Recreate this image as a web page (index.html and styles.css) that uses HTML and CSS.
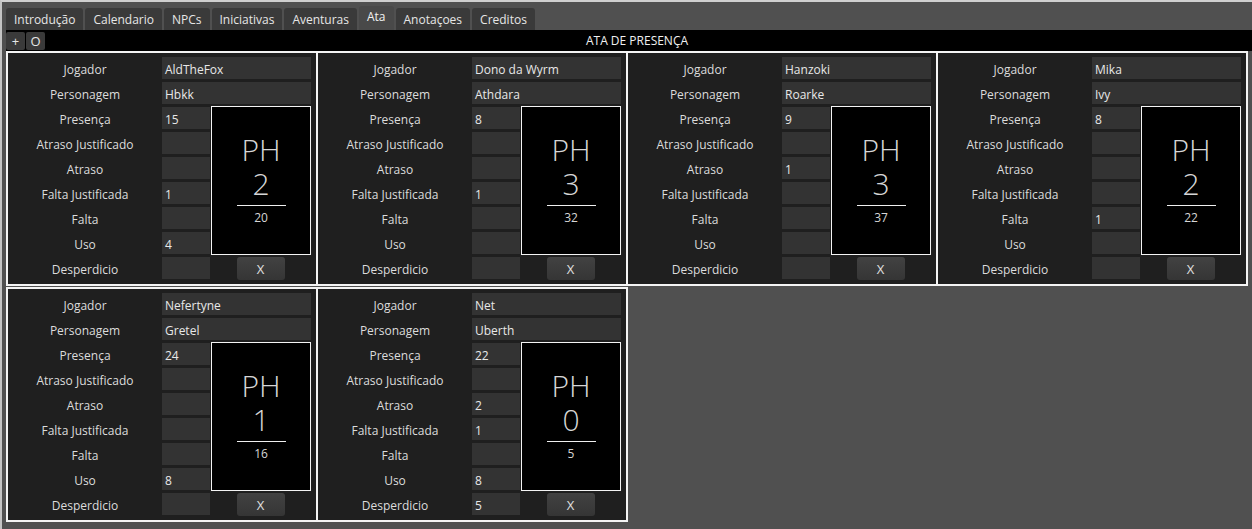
FILE: index.html
```html
<!DOCTYPE html>
<html lang="pt">
<head>
<meta charset="utf-8">
<title>Ata</title>
<link rel="stylesheet" href="styles.css">
</head>
<body>
<div class="window">
  <div class="tabs">
    <div class="tab">Introdução</div>
    <div class="tab">Calendario</div>
    <div class="tab">NPCs</div>
    <div class="tab">Iniciativas</div>
    <div class="tab">Aventuras</div>
    <div class="tab active">Ata</div>
    <div class="tab">Anotaçoes</div>
    <div class="tab">Creditos</div>
  </div>
  <div class="toolbar">
    <div class="tbtn">+</div>
    <div class="tbtn">O</div>
    <div class="title">ATA DE PRESENÇA</div>
  </div>
  <div class="cards">

    <div class="card">
      <div class="lbl">Jogador</div><div class="field wide">AldTheFox</div>
      <div class="lbl">Personagem</div><div class="field wide">Hbkk</div>
      <div class="lbl">Presença</div><div class="field">15</div>
      <div class="ph"><div class="big">PH<br>2</div><div class="rule"></div><div class="small">20</div></div>
      <div class="lbl">Atraso Justificado</div><div class="field"></div>
      <div class="lbl">Atraso</div><div class="field"></div>
      <div class="lbl">Falta Justificada</div><div class="field">1</div>
      <div class="lbl">Falta</div><div class="field"></div>
      <div class="lbl">Uso</div><div class="field">4</div>
      <div class="lbl">Desperdicio</div><div class="field"></div>
      <div class="xbtn">X</div>
    </div>

    <div class="card">
      <div class="lbl">Jogador</div><div class="field wide">Dono da Wyrm</div>
      <div class="lbl">Personagem</div><div class="field wide">Athdara</div>
      <div class="lbl">Presença</div><div class="field">8</div>
      <div class="ph"><div class="big">PH<br>3</div><div class="rule"></div><div class="small">32</div></div>
      <div class="lbl">Atraso Justificado</div><div class="field"></div>
      <div class="lbl">Atraso</div><div class="field"></div>
      <div class="lbl">Falta Justificada</div><div class="field">1</div>
      <div class="lbl">Falta</div><div class="field"></div>
      <div class="lbl">Uso</div><div class="field"></div>
      <div class="lbl">Desperdicio</div><div class="field"></div>
      <div class="xbtn">X</div>
    </div>

    <div class="card">
      <div class="lbl">Jogador</div><div class="field wide">Hanzoki</div>
      <div class="lbl">Personagem</div><div class="field wide">Roarke</div>
      <div class="lbl">Presença</div><div class="field">9</div>
      <div class="ph"><div class="big">PH<br>3</div><div class="rule"></div><div class="small">37</div></div>
      <div class="lbl">Atraso Justificado</div><div class="field"></div>
      <div class="lbl">Atraso</div><div class="field">1</div>
      <div class="lbl">Falta Justificada</div><div class="field"></div>
      <div class="lbl">Falta</div><div class="field"></div>
      <div class="lbl">Uso</div><div class="field"></div>
      <div class="lbl">Desperdicio</div><div class="field"></div>
      <div class="xbtn">X</div>
    </div>

    <div class="card">
      <div class="lbl">Jogador</div><div class="field wide">Mika</div>
      <div class="lbl">Personagem</div><div class="field wide">Ivy</div>
      <div class="lbl">Presença</div><div class="field">8</div>
      <div class="ph"><div class="big">PH<br>2</div><div class="rule"></div><div class="small">22</div></div>
      <div class="lbl">Atraso Justificado</div><div class="field"></div>
      <div class="lbl">Atraso</div><div class="field"></div>
      <div class="lbl">Falta Justificada</div><div class="field"></div>
      <div class="lbl">Falta</div><div class="field">1</div>
      <div class="lbl">Uso</div><div class="field"></div>
      <div class="lbl">Desperdicio</div><div class="field"></div>
      <div class="xbtn">X</div>
    </div>

    <div class="card">
      <div class="lbl">Jogador</div><div class="field wide">Nefertyne</div>
      <div class="lbl">Personagem</div><div class="field wide">Gretel</div>
      <div class="lbl">Presença</div><div class="field">24</div>
      <div class="ph"><div class="big">PH<br>1</div><div class="rule"></div><div class="small">16</div></div>
      <div class="lbl">Atraso Justificado</div><div class="field"></div>
      <div class="lbl">Atraso</div><div class="field"></div>
      <div class="lbl">Falta Justificada</div><div class="field"></div>
      <div class="lbl">Falta</div><div class="field"></div>
      <div class="lbl">Uso</div><div class="field">8</div>
      <div class="lbl">Desperdicio</div><div class="field"></div>
      <div class="xbtn">X</div>
    </div>

    <div class="card">
      <div class="lbl">Jogador</div><div class="field wide">Net</div>
      <div class="lbl">Personagem</div><div class="field wide">Uberth</div>
      <div class="lbl">Presença</div><div class="field">22</div>
      <div class="ph"><div class="big">PH<br>0</div><div class="rule"></div><div class="small">5</div></div>
      <div class="lbl">Atraso Justificado</div><div class="field"></div>
      <div class="lbl">Atraso</div><div class="field">2</div>
      <div class="lbl">Falta Justificada</div><div class="field">1</div>
      <div class="lbl">Falta</div><div class="field"></div>
      <div class="lbl">Uso</div><div class="field">8</div>
      <div class="lbl">Desperdicio</div><div class="field">5</div>
      <div class="xbtn">X</div>
    </div>

  </div>
</div>
</body>
</html>
```
FILE: styles.css
```css
* { box-sizing: border-box; }

html, body {
  margin: 0;
  padding: 0;
  background: #505050;
}

body {
  font-family: "Open Sans", "Noto Sans", "DejaVu Sans", sans-serif;
  font-size: 12px;
  color: #e4e4e4;
}

.window {
  height: 529px;
  border-top: 2px solid #cfcfcf;
  border-left: 2px solid #c4c4c4;
  padding-left: 4px;
  overflow: hidden;
}

.tabs {
  display: flex;
  align-items: flex-end;
  gap: 2px;
  height: 28px;
}

.tab {
  height: 22px;
  padding: 2px 8px 0;
  line-height: 20px;
  background: #3a3a3a;
  border-radius: 3px 3px 0 0;
  color: #e6e6e6;
  white-space: nowrap;
}

.tab.active {
  height: 24px;
  padding-top: 1px;
  line-height: 20px;
  background: #494949;
  color: #f2f2f2;
}

.toolbar {
  display: flex;
  align-items: center;
  gap: 1px;
  height: 21px;
  background: #000;
}

.tbtn {
  width: 19px;
  height: 18px;
  line-height: 18px;
  text-align: center;
  background: #3a3a3a;
  border-radius: 2px;
  font-size: 13px;
  color: #e6e6e6;
}

.title {
  flex: 1;
  text-align: center;
  padding-right: 24px;
  color: #f0f0f0;
}

.cards {
  display: flex;
  flex-wrap: wrap;
  row-gap: 1px;
  width: 1246px;
}

.card {
  width: 312px;
  height: 235px;
  margin-right: -2px;
  border: 2px solid #f4f4f4;
  background: #1f1f1f;
  display: grid;
  grid-template-columns: 154px 48px 101px;
  grid-template-rows: repeat(9, 22px);
  row-gap: 3px;
  padding: 4px 5px 5px 0;
}

.lbl {
  grid-column: 1;
  text-align: center;
  padding-top: 4px;
  line-height: 18px;
  color: #dcdcdc;
  white-space: nowrap;
}

.field {
  grid-column: 2;
  background: #333333;
  padding: 4px 0 0 3px;
  line-height: 18px;
  color: #e8e8e8;
  white-space: nowrap;
  overflow: hidden;
}

.field.wide {
  grid-column: 2 / 4;
}

.ph {
  grid-column: 3;
  grid-row: 3 / 9;
  margin: -1px 0 -1px 1px;
  background: #000;
  border: 1px solid #f4f4f4;
  display: flex;
  flex-direction: column;
  align-items: center;
  justify-content: center;
  color: #d6d6d6;
  padding-bottom: 2px;
}

.big {
  font-size: 30px;
  font-weight: 300;
  line-height: 34px;
  text-align: center;
}

.rule {
  width: 49px;
  height: 1px;
  margin-top: 4px;
  background: #f0f0f0;
}

.small {
  margin-top: 4px;
  font-size: 12px;
  line-height: 16px;
}

.xbtn {
  grid-column: 3;
  grid-row: 9;
  justify-self: center;
  width: 48px;
  height: 23px;
  padding-top: 2px;
  line-height: 21px;
  text-align: center;
  border-radius: 3px;
  background: linear-gradient(#424242, #353535);
  color: #e0e0e0;
  font-size: 13px;
}
```
